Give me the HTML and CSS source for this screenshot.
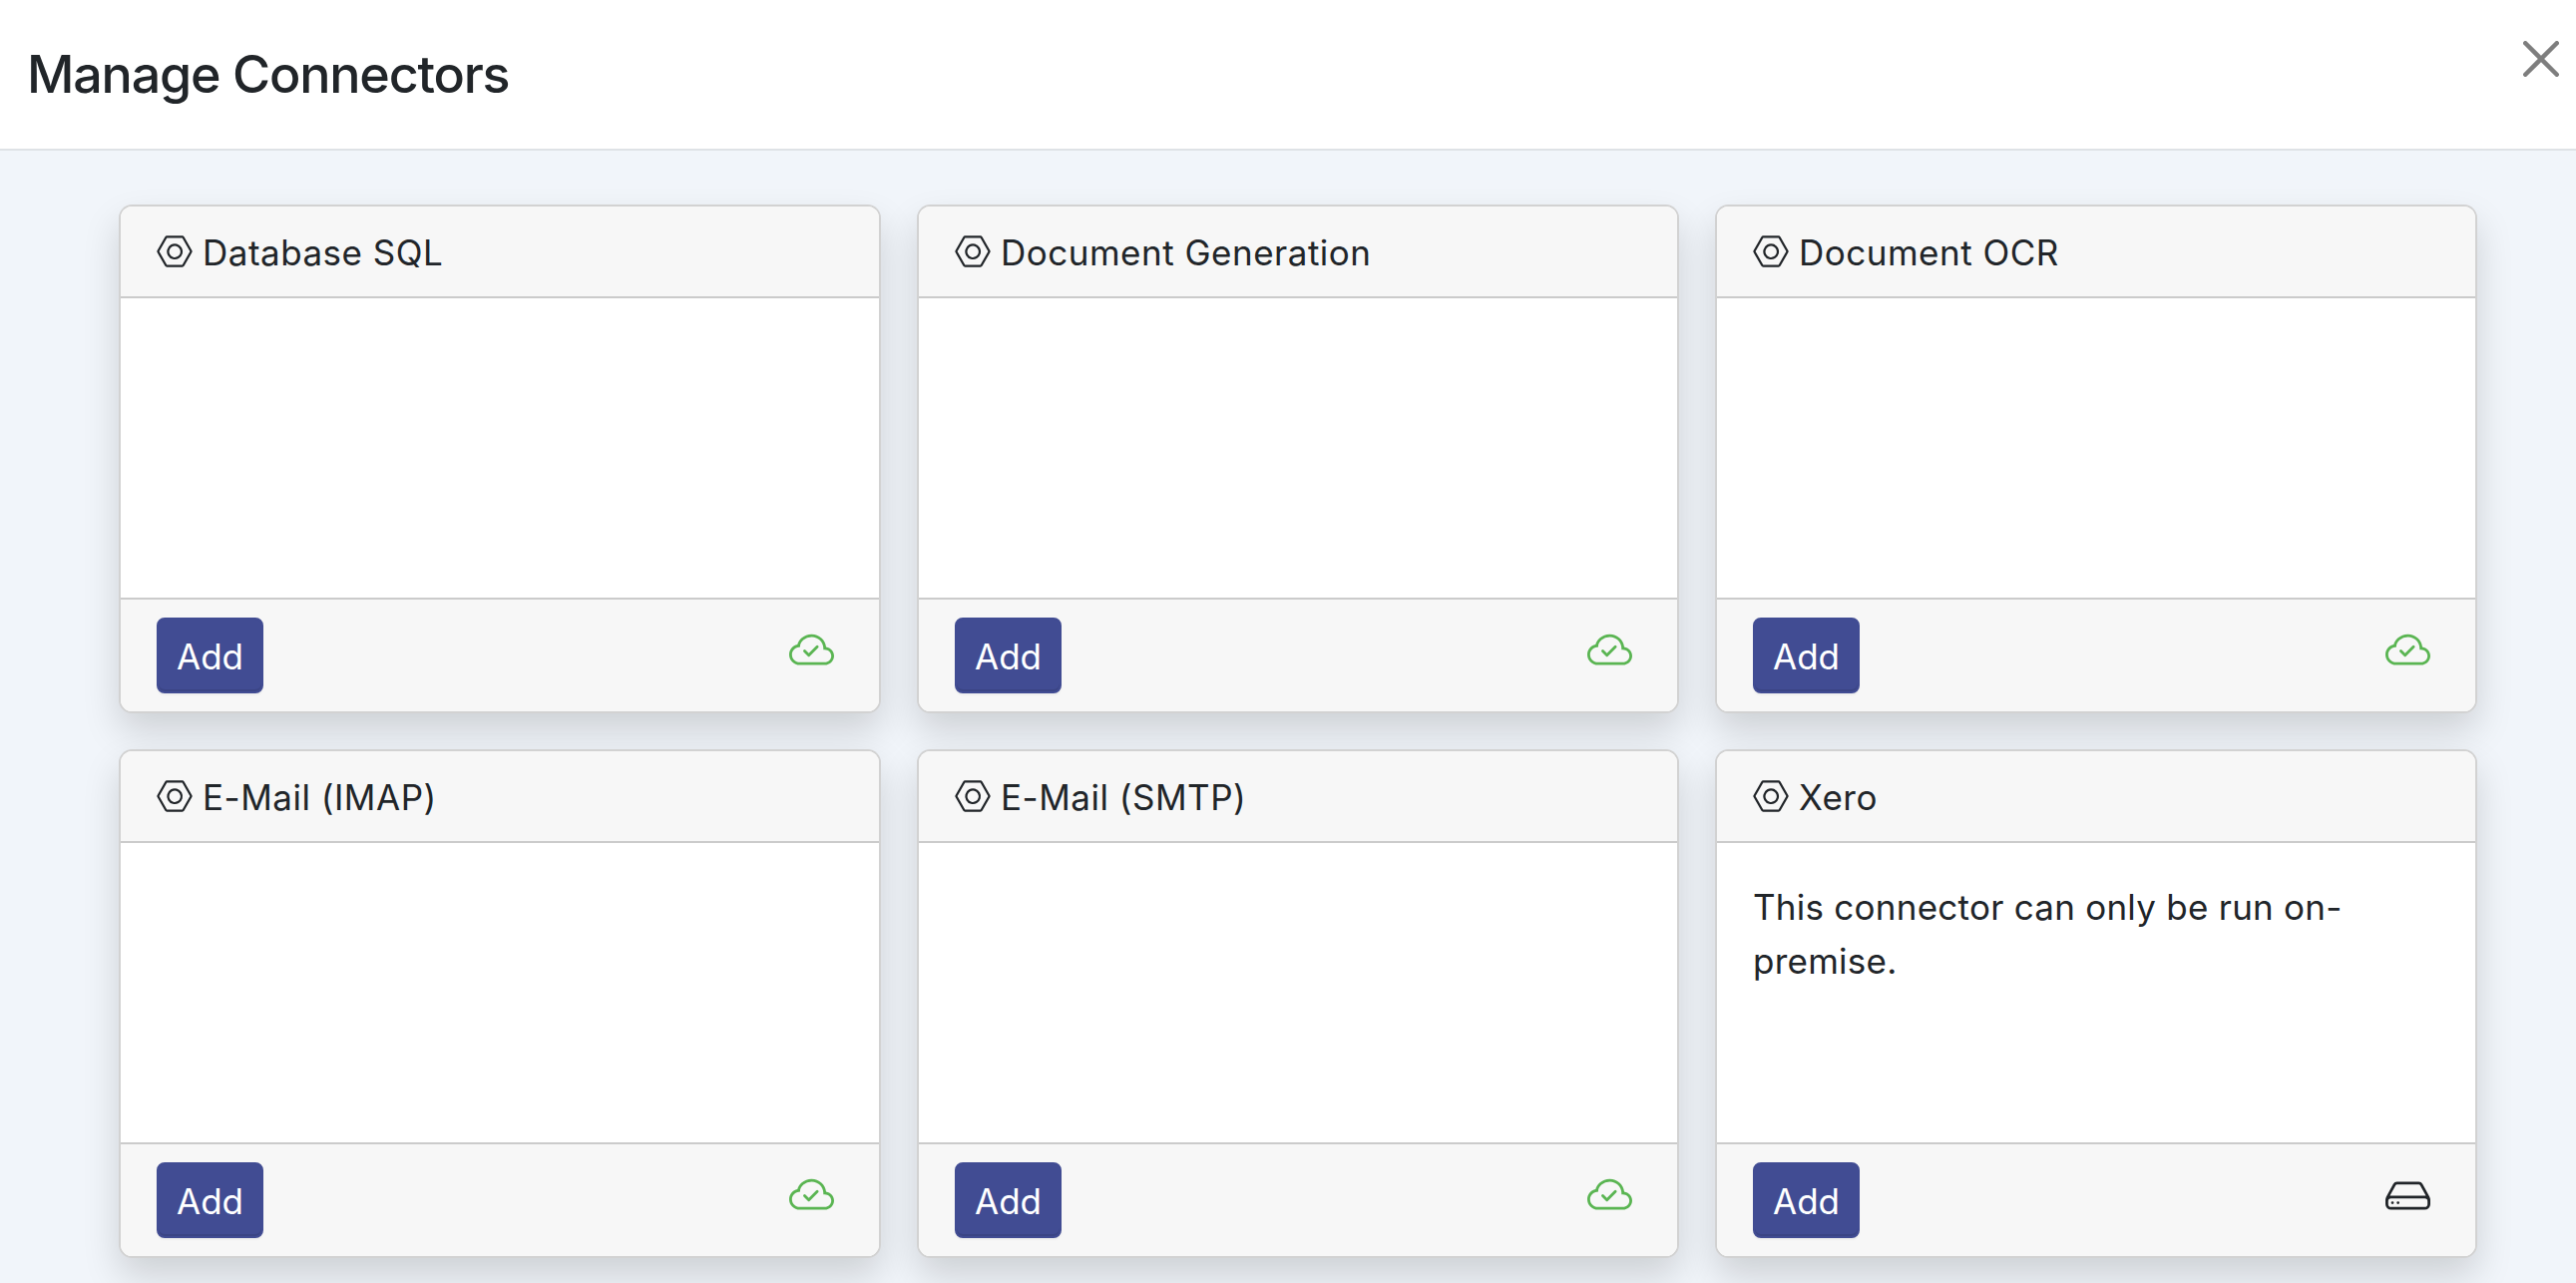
FILE: index.html
```
<!DOCTYPE html>
<html lang="en">
<head>
<meta charset="utf-8">
<title>Manage Connectors</title>
<link rel="stylesheet" href="styles.css">
</head>
<body>
<svg class="sprite" aria-hidden="true">
  <symbol id="nut" viewBox="0 0 16 16">
    <path d="m11.42 2 3.428 6-3.428 6H4.58L1.152 8 4.58 2zM4.58 1a1 1 0 0 0-.868.504l-3.428 6a1 1 0 0 0 0 .992l3.428 6A1 1 0 0 0 4.58 15h6.84a1 1 0 0 0 .868-.504l3.429-6a1 1 0 0 0 0-.992l-3.429-6A1 1 0 0 0 11.42 1z"/>
    <path d="M6.848 5.933a2.5 2.5 0 1 0 2.5 4.33 2.5 2.5 0 0 0-2.5-4.33m-1.78 3.915a3.5 3.5 0 1 1 6.061-3.5 3.5 3.5 0 0 1-6.062 3.5z"/>
  </symbol>
  <symbol id="cloud-check" viewBox="0 0 16 16">
    <path d="M10.354 6.146a.5.5 0 0 1 0 .708l-3 3a.5.5 0 0 1-.708 0l-1.5-1.5a.5.5 0 1 1 .708-.708L7 8.793l2.646-2.647a.5.5 0 0 1 .708 0"/>
    <path d="M4.406 3.342A5.53 5.53 0 0 1 8 2c2.69 0 4.923 2 5.166 4.579C14.758 6.804 16 8.137 16 9.773 16 11.569 14.502 13 12.687 13H3.781C1.708 13 0 11.366 0 9.318c0-1.763 1.266-3.223 2.942-3.593.143-.863.698-1.723 1.464-2.383m.653.757c-.757.653-1.153 1.44-1.153 2.056v.448l-.445.049C2.064 6.805 1 7.952 1 9.318 1 10.785 2.23 12 3.781 12h8.906C13.98 12 15 10.988 15 9.773c0-1.216-1.02-2.228-2.313-2.228h-.5v-.5C12.188 4.825 10.328 3 8 3a4.53 4.53 0 0 0-2.941 1.1z"/>
  </symbol>
  <symbol id="hdd" viewBox="0 0 16 16">
    <path d="M4.5 11a.5.5 0 1 0 0-1 .5.5 0 0 0 0 1M3 10.5a.5.5 0 1 1-1 0 .5.5 0 0 1 1 0"/>
    <path d="M16 11a2 2 0 0 1-2 2H2a2 2 0 0 1-2-2V9.51c0-.418.105-.83.305-1.197l2.472-4.531A1.5 1.5 0 0 1 4.094 3h7.812a1.5 1.5 0 0 1 1.317.782l2.472 4.53c.2.368.305.78.305 1.198zM3.655 4.26 1.592 8.043Q1.79 8 2 8h12q.21 0 .408.042L12.345 4.26a.5.5 0 0 0-.439-.26H4.094a.5.5 0 0 0-.44.26zM1 10v1a1 1 0 0 0 1 1h12a1 1 0 0 0 1-1v-1a1 1 0 0 0-1-1H2a1 1 0 0 0-1 1"/>
  </symbol>
</svg>

<header class="modal-header">
  <h1 class="modal-title">Manage Connectors</h1>
  <button class="close" aria-label="Close">
    <svg class="close-icon" viewBox="0 0 16 16"><path d="M.293.293a1 1 0 0 1 1.414 0L8 6.586 14.293.293a1 1 0 1 1 1.414 1.414L9.414 8l6.293 6.293a1 1 0 0 1-1.414 1.414L8 9.414l-6.293 6.293a1 1 0 0 1-1.414-1.414L6.586 8 .293 1.707a1 1 0 0 1 0-1.414z"/></svg>
  </button>
</header>

<main class="connectors">
  <article class="card">
    <div class="card-header"><svg class="nut"><use href="#nut"/></svg><span>Database SQL</span></div>
    <div class="card-body"></div>
    <div class="card-footer"><button class="btn">Add</button><svg class="status cloud"><use href="#cloud-check"/></svg></div>
  </article>
  <article class="card">
    <div class="card-header"><svg class="nut"><use href="#nut"/></svg><span>Document Generation</span></div>
    <div class="card-body"></div>
    <div class="card-footer"><button class="btn">Add</button><svg class="status cloud"><use href="#cloud-check"/></svg></div>
  </article>
  <article class="card">
    <div class="card-header"><svg class="nut"><use href="#nut"/></svg><span>Document OCR</span></div>
    <div class="card-body"></div>
    <div class="card-footer"><button class="btn">Add</button><svg class="status cloud"><use href="#cloud-check"/></svg></div>
  </article>
  <article class="card">
    <div class="card-header"><svg class="nut"><use href="#nut"/></svg><span>E-Mail (IMAP)</span></div>
    <div class="card-body"></div>
    <div class="card-footer"><button class="btn">Add</button><svg class="status cloud"><use href="#cloud-check"/></svg></div>
  </article>
  <article class="card">
    <div class="card-header"><svg class="nut"><use href="#nut"/></svg><span>E-Mail (SMTP)</span></div>
    <div class="card-body"></div>
    <div class="card-footer"><button class="btn">Add</button><svg class="status cloud"><use href="#cloud-check"/></svg></div>
  </article>
  <article class="card">
    <div class="card-header"><svg class="nut"><use href="#nut"/></svg><span>Xero</span></div>
    <div class="card-body">This connector can only be run on-premise.</div>
    <div class="card-footer"><button class="btn">Add</button><svg class="status"><use href="#hdd"/></svg></div>
  </article>
</main>
</body>
</html>
```
FILE: styles.css
```
* {
  box-sizing: border-box;
}

body {
  margin: 0;
  height: 1286px;
  overflow: hidden;
  background: #f1f5fa;
  color: #212529;
  font: 35px/54px Inter, "Liberation Sans", sans-serif;
}

.sprite {
  display: none;
}

svg {
  display: block;
  flex: none;
  fill: currentColor;
}

.modal-header {
  display: flex;
  justify-content: space-between;
  align-items: flex-start;
  height: 151px;
  padding: 36px 17px 0 27px;
  background: #fff;
  border-bottom: 2px solid #dee2e6;
}

.modal-title {
  margin: 0;
  font-size: 52px;
  font-weight: 500;
  line-height: 78px;
  letter-spacing: -1.2px;
}

.close {
  margin: 5px 0 0;
  padding: 0;
  border: 0;
  background: none;
  color: #000;
  opacity: 0.5;
}

.close-icon {
  width: 36px;
  height: 36px;
}

.connectors {
  display: grid;
  grid-template-columns: repeat(3, 764px);
  gap: 36px;
  padding: 54px 99px 54px 119px;
}

.card {
  display: flex;
  flex-direction: column;
  height: 510px;
  background: #fff;
  background-clip: border-box;
  border: 2px solid rgba(0, 0, 0, 0.175);
  border-radius: 13.5px;
  box-shadow: 0 18px 36px rgba(0, 0, 0, 0.15);
}

.card-header {
  display: flex;
  align-items: center;
  gap: 10px;
  height: 92px;
  padding: 0 36px;
  background: #f7f7f7;
  border-bottom: 2px solid #cbcbcb;
  border-radius: 11.5px 11.5px 0 0;
  letter-spacing: 0.5px;
}

.card-header span {
  padding-top: 2px;
}

.nut {
  width: 36px;
  height: 36px;
}

.card-body {
  flex: 1;
  padding: 37px 36px 0;
  letter-spacing: 0.25px;
}

.card-footer {
  display: flex;
  justify-content: space-between;
  align-items: flex-start;
  height: 114px;
  padding: 18px 45px 0 36px;
  background: #f7f7f7;
  border-top: 2px solid #cbcbcb;
  border-radius: 0 0 11.5px 11.5px;
}

.btn {
  width: 107px;
  height: 76px;
  padding: 2px 0 0;
  border: 2px solid #414c93;
  border-radius: 8px;
  background: #414c93;
  color: #fff;
  font: inherit;
  box-shadow: inset 0 -2px 0 rgba(0, 0, 0, 0.1), 0 2px 2px rgba(0, 0, 0, 0.04);
}

.status {
  width: 45px;
  height: 45px;
  margin-top: 11px;
}

.cloud {
  color: #5ab552;
}
```
